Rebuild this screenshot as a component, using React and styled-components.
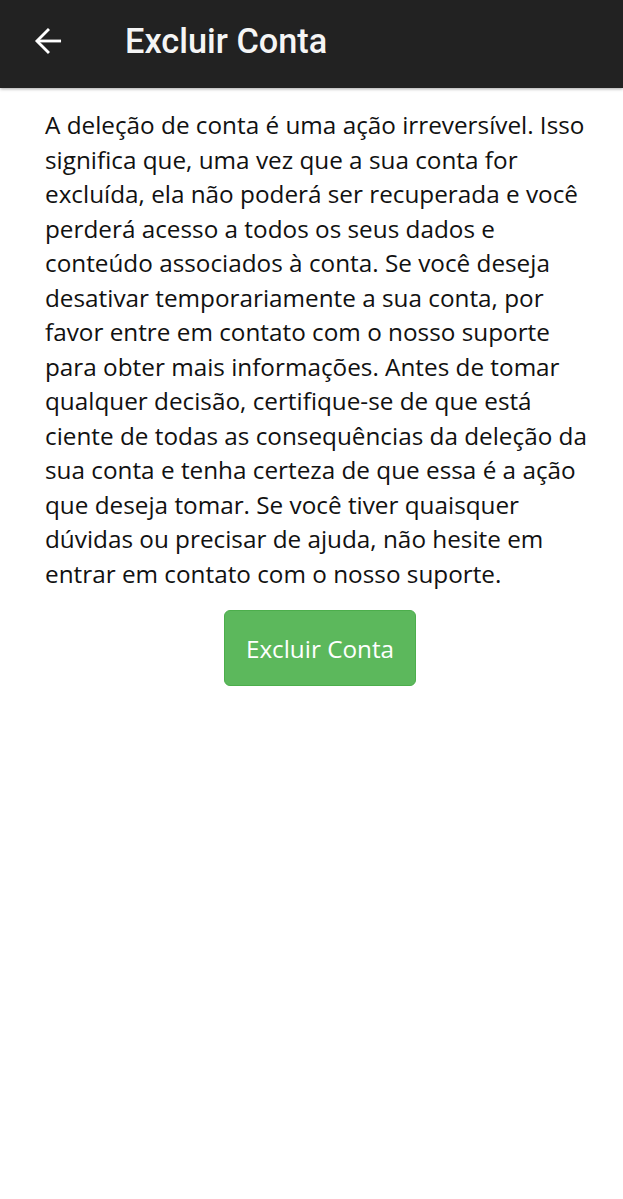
import React from 'react';
import styled, { createGlobalStyle } from 'styled-components';

const GlobalStyle = createGlobalStyle`
  html, body {
    margin: 0;
    padding: 0;
    background: #ffffff;
  }
`;

const Screen = styled.div`
  display: flex;
  flex-direction: column;
  width: 623px;
  min-height: 1199px;
  background: #fff;
`;

const TopBar = styled.header`
  display: flex;
  align-items: center;
  height: 88px;
  box-sizing: border-box;
  padding-bottom: 6px;
  background: #222222;
  box-shadow: 0 1px 3px rgba(0, 0, 0, 0.35);
  padding-left: 31px;
  gap: 58px;
  position: relative;
  z-index: 1;
`;

const BackButton = styled.button`
  display: flex;
  align-items: center;
  justify-content: center;
  width: 36px;
  height: 36px;
  padding: 0;
  border: none;
  background: transparent;
  color: #fff;
  cursor: pointer;
`;

const Title = styled.h1`
  margin: 0;
  font-family: Roboto, "Liberation Sans", sans-serif;
  font-weight: 500;
  font-size: 34.3px;
  color: #f5f5f5;
`;

const Content = styled.main`
  display: flex;
  flex-direction: column;
  align-items: center;
  padding: 20px 32px 0 45px;
`;

const Paragraph = styled.p`
  margin: 0;
  font-family: "Open Sans", sans-serif;
  font-size: 24.3px;
  line-height: 34.5px;
  color: #111;
  align-self: stretch;
`;

const ActionButton = styled.button`
  margin-top: 19px;
  width: 192px;
  height: 76px;
  border-radius: 6px;
  border: 1px solid ${(p) => (p.$danger ? '#4cae4c' : '#ccc')};
  background: ${(p) => (p.$danger ? '#5cb85c' : '#fff')};
  color: #fff;
  font-family: "Open Sans", sans-serif;
  font-size: 24.3px;
  padding: 0;
  cursor: pointer;
  margin-left: 4px;
`;

const ArrowIcon = () => (
  <svg width="34" height="34" viewBox="0 0 24 24" fill="none" stroke="currentColor" strokeWidth="2">
    <path d="M20.5 12H4" />
    <path d="M12 3.5L3.5 12l8.5 8.5" strokeLinejoin="miter" />
  </svg>
);

const texto =
  'A deleção de conta é uma ação irreversível. Isso significa que, uma vez que a sua conta for excluída, ela não poderá ser recuperada e você perderá acesso a todos os seus dados e conteúdo associados à conta. Se você deseja desativar temporariamente a sua conta, por favor entre em contato com o nosso suporte para obter mais informações. Antes de tomar qualquer decisão, certifique-se de que está ciente de todas as consequências da deleção da sua conta e tenha certeza de que essa é a ação que deseja tomar. Se você tiver quaisquer dúvidas ou precisar de ajuda, não hesite em entrar em contato com o nosso suporte.';

const App = () => {
  return (
    <>
      <GlobalStyle />
      <Screen>
        <TopBar>
          <BackButton aria-label="Voltar">
            <ArrowIcon />
          </BackButton>
          <Title>Excluir Conta</Title>
        </TopBar>
        <Content>
          <Paragraph>{texto}</Paragraph>
          <ActionButton $danger>Excluir Conta</ActionButton>
        </Content>
      </Screen>
    </>
  );
};

export default App;
